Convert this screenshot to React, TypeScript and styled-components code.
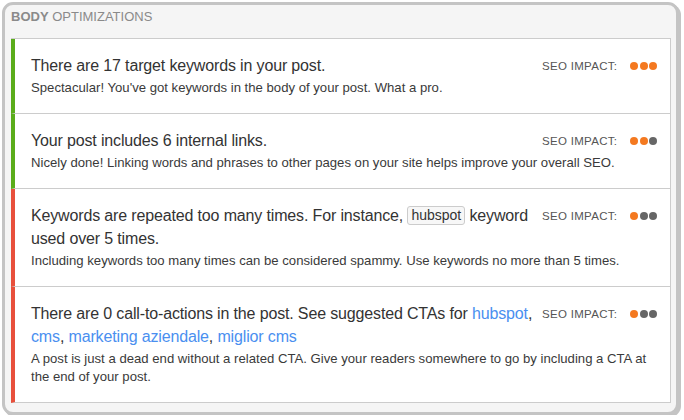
import React from "react";
import styled, { createGlobalStyle } from "styled-components";

const Global = createGlobalStyle`
  html, body { margin: 0; padding: 0; background: #ffffff; }
  body { font-family: "Liberation Sans", Arial, sans-serif; }
`;

const Frame = styled.div`
  box-sizing: border-box;
  margin: 2px 0 0 2px;
  width: 677px;
  height: 413px;
  border: 3px solid #c4c4c4;
  border-radius: 11px;
  box-shadow: 2px 2px 0 #c4c4c4;
  background: #f5f5f5;
  padding: 4px 5px 8px 6px;
  display: flex;
  flex-direction: column;
`;

const Header = styled.div`
  font-size: 13px;
  line-height: 16px;
  color: #8a8a8a;
  text-transform: uppercase;
  margin-bottom: 13px;
  b { font-weight: bold; }
`;

const List = styled.div`
  background: #fff;
  border-top: 1px solid #cccccc;
  border-right: 1px solid #cccccc;
`;

const Card = styled.div<{ $status: "good" | "bad" }>`
  border-left: 4px solid ${(p) => (p.$status === "good" ? "#5aac1a" : "#e8503c")};
  border-bottom: 1px solid #cccccc;
  padding: 15px 12px 16px 16px;
  display: grid;
  grid-template-columns: 1fr 116px;
  column-gap: 4px;
  row-gap: 2px;
`;

const Title = styled.div`
  font-size: 16px;
  letter-spacing: -0.15px;
  line-height: 23px;
  color: #333;
`;

const Desc = styled.div`
  grid-column: 1 / span 2;
  font-size: 13.15px;
  line-height: 18px;
  color: #3a3a3a;
`;

const Impact = styled.div`
  height: 23px;
  display: flex;
  align-items: center;
  justify-content: flex-start;
`;

const ImpactLabel = styled.span`
  font-size: 11.5px;
  letter-spacing: 0.3px;
  color: #555;
  text-transform: uppercase;
  margin-right: 13px;
  white-space: nowrap;
`;

const Dots = styled.span`
  display: flex;
  gap: 1.5px;
`;

const Dot = styled.span<{ $on: boolean }>`
  width: 8px;
  height: 8px;
  border-radius: 50%;
  background: ${(p) => (p.$on ? "#f47920" : "#666666")};
`;

const Tag = styled.span`
  display: inline-block;
  font-size: 14px;
  letter-spacing: 0;
  line-height: 17px;
  padding: 0 3px;
  border: 1px solid #cccccc;
  border-radius: 3px;
  background: #f7f7f7;
  color: #333;
  vertical-align: 1px;
`;

const Link = styled.a`
  color: #4a8ff0;
  text-decoration: none;
`;

type Item = {
  status: "good" | "bad";
  level: number;
  title: React.ReactNode;
  desc: string;
};

const items: Item[] = [
  {
    status: "good",
    level: 3,
    title: "There are 17 target keywords in your post.",
    desc: "Spectacular! You've got keywords in the body of your post. What a pro.",
  },
  {
    status: "good",
    level: 2,
    title: "Your post includes 6 internal links.",
    desc: "Nicely done! Linking words and phrases to other pages on your site helps improve your overall SEO.",
  },
  {
    status: "bad",
    level: 1,
    title: (
      <>
        Keywords are repeated too many times. For instance, <Tag>hubspot</Tag> keyword used over 5 times.
      </>
    ),
    desc: "Including keywords too many times can be considered spammy. Use keywords no more than 5 times.",
  },
  {
    status: "bad",
    level: 1,
    title: (
      <>
        There are 0 call-to-actions in the post. See suggested CTAs for <Link href="#">hubspot</Link>,{" "}
        <Link href="#">cms</Link>, <Link href="#">marketing aziendale</Link>, <Link href="#">miglior cms</Link>
      </>
    ),
    desc: "A post is just a dead end without a related CTA. Give your readers somewhere to go by including a CTA at the end of your post.",
  },
];

export default function App() {
  return (
    <>
      <Global />
      <Frame>
        <Header>
          <b>Body</b> Optimizations
        </Header>
        <List>
          {items.map((it, i) => (
            <Card key={i} $status={it.status}>
              <Title>{it.title}</Title>
              <Impact>
                <ImpactLabel>SEO Impact:</ImpactLabel>
                <Dots>
                  {[0, 1, 2].map((d) => (
                    <Dot key={d} $on={d < it.level} />
                  ))}
                </Dots>
              </Impact>
              <Desc>{it.desc}</Desc>
            </Card>
          ))}
        </List>
      </Frame>
    </>
  );
}
